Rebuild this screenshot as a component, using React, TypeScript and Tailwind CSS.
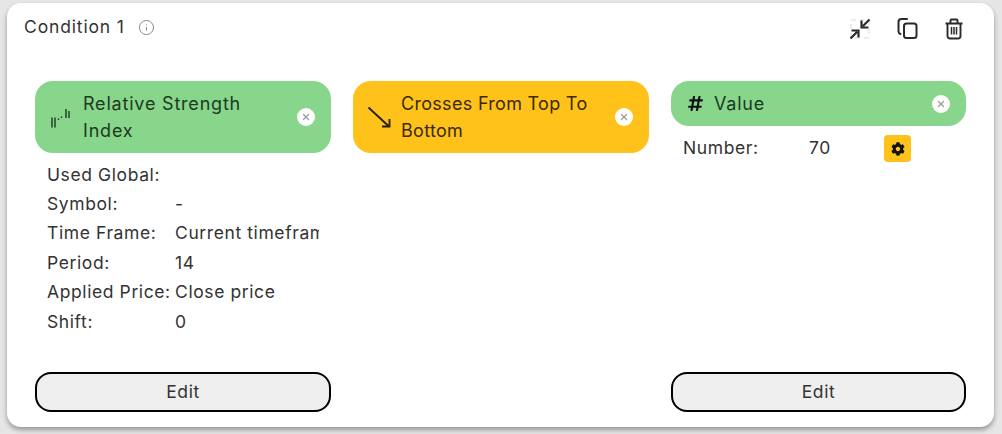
import React from "react";
import { Info, X } from "lucide-react";
import { FaCog, FaHashtag } from "react-icons/fa";

const font = "font-['Inter','Liberation_Sans',sans-serif]";

function Remove() {
  return (
    <span className="flex h-[18px] w-[18px] shrink-0 items-center justify-center rounded-full bg-white text-[#9a9a9a]">
      <X size={10} strokeWidth={3} />
    </span>
  );
}

function Pill({ color, icon, text, iconW, ink, track }: { color: string; icon: React.ReactNode; text: React.ReactNode; iconW: string; ink: string; track: string }) {
  return (
    <div className={`flex items-center rounded-[18px] py-[9px] pl-[14px] pr-4 ${color} ${ink}`}>
      <span className={`flex shrink-0 items-center ${iconW}`}>{icon}</span>
      <span className={`flex-1 text-[18px] leading-[27px] ${track}`}>{text}</span>
      <Remove />
    </div>
  );
}

function Row({ k, v }: { k: string; v?: string }) {
  return (
    <div className="flex h-[29.4px] items-center">
      <span className="w-[128px] shrink-0 whitespace-nowrap">{k}</span>
      <span className="w-[144px] overflow-hidden whitespace-nowrap">{v}</span>
    </div>
  );
}

function Edit() {
  return (
    <button className="h-10 w-full rounded-[16px] border-2 border-black bg-[#efefef] text-[17.5px] tracking-[0.55px] text-[#333333]">
      Edit
    </button>
  );
}

export default function App() {
  return (
    <div className={`h-[434px] w-[1002px] overflow-hidden bg-[#e6e6e6] pl-[7px] pr-[8px] pt-[3px] ${font}`}>
      <div className="flex h-[424px] flex-col rounded-[14px] bg-white shadow-[0_3px_5px_rgba(0,0,0,0.35)]">
        <div className="flex h-[78px] items-start justify-between pl-[17px] pr-[28px] pt-[12px]">
          <div className="flex h-6 items-center gap-[13px] pt-[1px] text-[17.5px] tracking-[0.85px] text-[#333333]">
            Condition 1
            <Info size={17} strokeWidth={1.4} className="text-[#888888]" />
          </div>
          <div className="flex items-center gap-[23px] pt-[2px] text-[#2a2a2a]">
            <svg width="24" height="24" viewBox="0 0 24 24" fill="none" stroke="currentColor" strokeWidth="2.2">
              <path d="M3 3h18v18H3z" stroke="#e8e8e8" strokeWidth="1.5" strokeDasharray="5 4" />
              <path d="M21.5 2.5L15 9M13.5 3.5V10.500h7M2.500 21.500L9 15M3.500 13.500h7V20.500" />
            </svg>
            <svg width="24" height="24" viewBox="0 0 24 24" fill="none" stroke="currentColor" strokeWidth="2">
              <rect x="9" y="6.500" width="12.500" height="14.500" rx="2.500" />
              <path d="M12 2H6.500A3 3 0 0 0 3.500 5V14.500A3 3 0 0 0 5.500 17" strokeLinecap="round" />
            </svg>
            <svg width="24" height="24" viewBox="0 0 24 24" fill="none" stroke="currentColor" strokeWidth="1.900">
              <path d="M3.500 6.500h17M8.500 6V3.500a1 1 0 0 1 1-1h5a1 1 0 0 1 1 1V6" />
              <path d="M5.500 6.500V19a2.500 2.500 0 0 0 2.500 2.500h8a2.500 2.500 0 0 0 2.500-2.500V6.500" />
              <path d="M9.500 10v7.500M12 10v7.500M14.500 10v7.500" strokeWidth="1.500" />
            </svg>
          </div>
        </div>
        <div className="flex flex-1 gap-[22px] pb-[15px] pl-[28px] pr-[28px] text-[17.5px] tracking-[0.6px] text-[#333333]">
          <div className="flex w-[296px] flex-col">
            <Pill
              color="bg-[#88d58c]"
              ink="text-[#1c3a20]"
              iconW="w-[34px]"
              track="tracking-[0.8px]"
              icon={
                <svg width="24" height="24" viewBox="0 0 24 24" stroke="#1c3a20" strokeWidth="1.400" fill="none">
                  <path d="M3 12.500v10M6 12.500v10M9.500 13.500v1.500M12.500 11.500v1.500M17 4v9M20 6v7" />
                </svg>
              }
              text={<>Relative Strength<br />Index</>}
            />
            <div className="flex-1 pl-3 pt-[7px]">
              <Row k="Used Global:" />
              <Row k="Symbol:" v="-" />
              <Row k="Time Frame:" v="Current timeframe" />
              <Row k="Period:" v="14" />
              <Row k="Applied Price:" v="Close price" />
              <Row k="Shift:" v="0" />
            </div>
            <Edit />
          </div>
          <div className="w-[296px]">
            <Pill
              color="bg-[#ffc21a]"
              ink="text-[#3a2a05]"
              iconW="w-[34px]"
              track="tracking-[0.3px]"
              icon={
                <svg width="24" height="24" viewBox="0 0 24 24" fill="none" stroke="#2a2208" strokeWidth="1.900">
                  <path d="M1.500 2.500L22 21.500M22.500 14v7.500H15" />
                </svg>
              }
              text={<>Crosses From Top To<br />Bottom</>}
            />
          </div>
          <div className="flex w-[295px] flex-col">
            <Pill color="bg-[#88d58c]" ink="text-[#1c3a20]" iconW="w-[29px] pl-[2px]" track="tracking-[0.8px]" icon={<FaHashtag size={17} className="text-[#111111]" />} text="Value" />
            <div className="flex flex-1 items-start pl-3 pt-[9px]">
              <span className="flex h-[27px] w-[126px] items-center">Number:</span>
              <span className="flex h-[27px] w-[75px] items-center">70</span>
              <span className="flex h-[27px] w-[27px] items-center justify-center rounded-[4px] bg-[#ffc21a]">
                <FaCog size={14} className="text-[#111111]" />
              </span>
            </div>
            <Edit />
          </div>
        </div>
      </div>
    </div>
  );
}
